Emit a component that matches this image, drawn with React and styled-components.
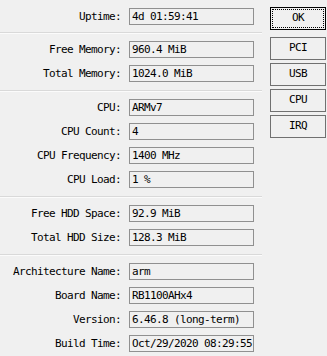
import React from "react";
import styled, { createGlobalStyle } from "styled-components";

const GlobalStyle = createGlobalStyle`
  html, body {
    margin: 0;
    padding: 0;
    background: #f0f0f0;
  }
  body {
    font-family: "DejaVu Sans Mono", "Liberation Mono", monospace;
    font-size: 11px;
    letter-spacing: -0.62px;
    color: #000;
  }
`;

const Window = styled.div`
  width: 327px;
  height: 356px;
  display: flex;
  background: #f0f0f0;
  overflow: hidden;
`;

const Panel = styled.div`
  width: 262px;
  display: flex;
  flex-direction: column;
`;

const Section = styled.div`
  display: flex;
  flex-direction: column;
  gap: 7px;
  padding: 8px 0 ${(p) => (p.$first ? "7px" : "8px")};
  border-bottom: ${(p) => (p.$last ? "none" : "1px solid #d9d9d9")};
  box-shadow: ${(p) => (p.$last ? "none" : "0 1px 0 #fbfbfb")};
`;

const Row = styled.div`
  display: flex;
  align-items: center;
  gap: 8px;
  height: 17px;
`;

const Label = styled.div`
  width: 121px;
  text-align: right;
  white-space: nowrap;
`;

const Field = styled.div`
  box-sizing: border-box;
  width: 125px;
  height: 17px;
  border: 1px solid #909090;
  padding: 0 2px;
  line-height: 15px;
  white-space: nowrap;
  overflow: hidden;
`;

const Buttons = styled.div`
  margin-left: 8px;
  padding-top: 7px;
  display: flex;
  flex-direction: column;
  gap: 3px;
`;

const Button = styled.button`
  position: relative;
  box-sizing: border-box;
  width: 56px;
  height: 23px;
  margin-bottom: ${(p) => (p.$default ? "4px" : "0")};
  background: #f0f0f0;
  border: 1px solid ${(p) => (p.$default ? "#000" : "#707070")};
  font: inherit;
  letter-spacing: inherit;
  color: #000;
  padding: 0 0 2px;
  &::after {
    content: "";
    display: ${(p) => (p.$default ? "block" : "none")};
    position: absolute;
    inset: 1px;
    border: 1px dotted #000;
  }
`;

const sections = [
  [["Uptime", "4d 01:59:41"]],
  [
    ["Free Memory", "960.4 MiB"],
    ["Total Memory", "1024.0 MiB"],
  ],
  [
    ["CPU", "ARMv7"],
    ["CPU Count", "4"],
    ["CPU Frequency", "1400 MHz"],
    ["CPU Load", "1 %"],
  ],
  [
    ["Free HDD Space", "92.9 MiB"],
    ["Total HDD Size", "128.3 MiB"],
  ],
  [
    ["Architecture Name", "arm"],
    ["Board Name", "RB1100AHx4"],
    ["Version", "6.46.8 (long-term)"],
    ["Build Time", "Oct/29/2020 08:29:55"],
  ],
];

const App = () => {
  return (
    <>
      <GlobalStyle />
      <Window>
        <Panel>
          {sections.map((rows, i) => (
            <Section key={i} $first={i === 0} $last={i === sections.length - 1}>
              {rows.map(([label, value]) => (
                <Row key={label}>
                  <Label>{label}:</Label>
                  <Field>{value}</Field>
                </Row>
              ))}
            </Section>
          ))}
        </Panel>
        <Buttons>
          <Button $default>OK</Button>
          <Button>PCI</Button>
          <Button>USB</Button>
          <Button>CPU</Button>
          <Button>IRQ</Button>
        </Buttons>
      </Window>
    </>
  );
};

export default App;
